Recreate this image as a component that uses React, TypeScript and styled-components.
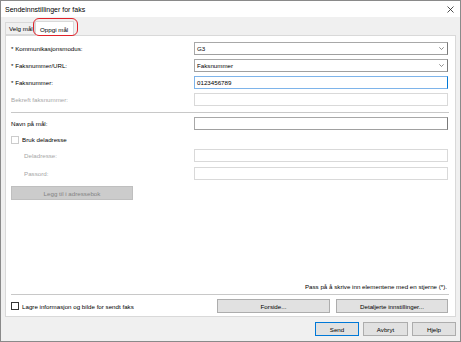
import React from "react";
import styled, { createGlobalStyle } from "styled-components";

const GlobalStyle = createGlobalStyle`
  html, body {
    margin: 0;
    padding: 0;
    background: #ffffff;
  }
  * {
    box-sizing: border-box;
  }
`;

const Window = styled.div`
  width: 461px;
  height: 342px;
  border: 1px solid #8a8a8a;
  background: #f0f0f0;
  display: flex;
  flex-direction: column;
  font-family: "Liberation Sans", Arial, sans-serif;
  font-size: 6.2px;
  color: #000;
  overflow: hidden;
`;

const TitleBar = styled.div`
  height: 16px;
  background: #ffffff;
  display: flex;
  align-items: center;
  justify-content: space-between;
  padding: 0 6px 0 4px;
  font-size: 7px;
`;

const CloseIcon = styled.svg`
  width: 7px;
  height: 7px;
`;

const Body = styled.div`
  flex: 1;
  display: flex;
  flex-direction: column;
  padding: 4px 4px 0 4px;
`;

const TabStrip = styled.div`
  height: 14px;
  display: flex;
  align-items: flex-end;
  position: relative;
`;

const Tab = styled.div<{ active?: boolean }>`
  height: ${({ active }) => (active ? "15px" : "13px")};
  width: ${({ active }) => (active ? "39px" : "30px")};
  padding: 0 ${({ active }) => (active ? "4px" : "3px")};
  display: flex;
  align-items: center;
  background: ${({ active }) => (active ? "#ffffff" : "#f0f0f0")};
  border: 1px solid #d9d9d9;
  border-bottom: ${({ active }) => (active ? "none" : "1px solid #d9d9d9")};
  position: relative;
  z-index: ${({ active }) => (active ? 2 : 1)};
  margin-bottom: ${({ active }) => (active ? "-1px" : "0")};
  white-space: nowrap;
  overflow: hidden;
`;

const Highlight = styled.div`
  position: absolute;
  left: 28px;
  top: -3px;
  width: 45px;
  height: 18px;
  border: 1.4px solid #e0222a;
  border-radius: 6px;
  z-index: 3;
  pointer-events: none;
`;

const Panel = styled.div`
  height: 282px;
  background: #ffffff;
  border: 1px solid #d9d9d9;
  padding: 6px 7px 3px 5px;
  display: flex;
  flex-direction: column;
`;

const Row = styled.div<{ mt?: number }>`
  display: grid;
  grid-template-columns: 183px 1fr;
  align-items: center;
  height: 13px;
  margin-top: ${({ mt }) => mt ?? 0}px;
`;

const Label = styled.span<{ disabled?: boolean; indent?: boolean }>`
  color: ${({ disabled }) => (disabled ? "#a6a6a6" : "#000")};
  padding-left: ${({ indent }) => (indent ? "13px" : "0")};
  white-space: nowrap;
`;

const Field = styled.div<{ variant?: "select" | "focus" | "disabled" | "normal" }>`
  height: 13px;
  display: flex;
  align-items: center;
  justify-content: space-between;
  padding: 0 3px 0 2px;
  background: #fff;
  border: 1px solid
    ${({ variant }) =>
      variant === "focus" ? "#7eb4ea" : variant === "disabled" ? "#d9d9d9" : "#a8a8a8"};
  border-right-color: ${({ variant }) =>
    variant === "focus" ? "#0078d7" : variant === "disabled" ? "#d9d9d9" : "#7a7a7a"};
  border-bottom-color: ${({ variant }) =>
    variant === "focus" ? "#7eb4ea" : variant === "disabled" ? "#d9d9d9" : "#a0a0a0"};
`;

const Chevron = styled.svg`
  width: 5px;
  height: 3px;
`;

const Separator = styled.div<{ mt?: number }>`
  height: 1px;
  background: #c8c8c8;
  margin-top: ${({ mt }) => mt ?? 0}px;
  margin-right: -1px;
`;

const CheckRow = styled.label<{ mt?: number }>`
  display: flex;
  align-items: center;
  gap: 3px;
  height: 9px;
  margin-top: ${({ mt }) => mt ?? 0}px;
`;

const Box = styled.span<{ disabled?: boolean }>`
  width: 8px;
  height: 8px;
  border: 1px solid ${({ disabled }) => (disabled ? "#cccccc" : "#333333")};
  background: #fff;
`;

const Button = styled.div<{ w: number; primary?: boolean; disabled?: boolean }>`
  width: ${({ w }) => w}px;
  height: 14px;
  display: flex;
  align-items: center;
  justify-content: center;
  background: ${({ disabled }) => (disabled ? "#cccccc" : "#e1e1e1")};
  color: ${({ disabled }) => (disabled ? "#838383" : "#000")};
  border: 1px solid ${({ primary, disabled }) => (primary ? "#0078d7" : disabled ? "#bfbfbf" : "#adadad")};
  white-space: nowrap;
`;

const ButtonWrap = styled.div`
  margin-top: 6px;
`;

const Spacer = styled.div`
  flex: 1;
`;

const Note = styled.div`
  text-align: right;
  height: 9px;
  line-height: 9px;
  padding-right: 1px;
`;

const BottomRow = styled.div`
  display: flex;
  align-items: center;
  margin-top: 4px;
  height: 14px;
  gap: 6px;
`;

const Footer = styled.div`
  display: flex;
  justify-content: flex-end;
  gap: 4px;
  padding: 5px 0 0 0;
`;

const SelectField = ({ value }: { value: string }) => (
  <Field variant="select">
    <span>{value}</span>
    <Chevron viewBox="0 0 5 3">
      <path d="M0.3 0.3 L2.5 2.5 L4.7 0.3" fill="none" stroke="#606060" strokeWidth="0.7" />
    </Chevron>
  </Field>
);

export default function App() {
  return (
    <>
      <GlobalStyle />
      <Window>
        <TitleBar>
          <span>Sendeinnstillinger for faks</span>
          <CloseIcon viewBox="0 0 7 7">
            <path d="M0.5 0.5 L6.5 6.5 M6.5 0.5 L0.5 6.5" stroke="#222" strokeWidth="0.8" />
          </CloseIcon>
        </TitleBar>
        <Body>
          <TabStrip>
            <Tab>Velg mål</Tab>
            <Tab active>Oppgi mål</Tab>
            <Highlight />
          </TabStrip>
          <Panel>
            <Row>
              <Label>* Kommunikasjonsmodus:</Label>
              <SelectField value="G3" />
            </Row>
            <Row mt={4}>
              <Label>* Faksnummer/URL:</Label>
              <SelectField value="Faksnummer" />
            </Row>
            <Row mt={4}>
              <Label>* Faksnummer:</Label>
              <Field variant="focus">
                <span>0123456789</span>
              </Field>
            </Row>
            <Row mt={4}>
              <Label disabled>Bekreft faksnummer:</Label>
              <Field variant="disabled" />
            </Row>
            <Separator mt={6} />
            <Row mt={4}>
              <Label>Navn på mål:</Label>
              <Field variant="normal" />
            </Row>
            <CheckRow mt={5}>
              <Box disabled />
              <Label>Bruk deladresse</Label>
            </CheckRow>
            <Row mt={5}>
              <Label disabled indent>Deladresse:</Label>
              <Field variant="disabled" />
            </Row>
            <Row mt={5}>
              <Label disabled indent>Passord:</Label>
              <Field variant="disabled" />
            </Row>
            <ButtonWrap>
              <Button w={122} disabled>Legg til i adressebok</Button>
            </ButtonWrap>
            <Spacer />
            <Note>Pass på å skrive inn elementene med en stjerne (*).</Note>
            <Separator mt={3} />
            <BottomRow>
              <CheckRow>
                <Box />
                <Label>Lagre informasjon og bilde for sendt faks</Label>
              </CheckRow>
              <Spacer />
              <Button w={113}>Forside...</Button>
              <Button w={112}>Detaljerte innstillinger...</Button>
            </BottomRow>
          </Panel>
          <Footer>
            <Button w={44} primary>Send</Button>
            <Button w={45}>Avbryt</Button>
            <Button w={44}>Hjelp</Button>
          </Footer>
        </Body>
      </Window>
    </>
  );
}
